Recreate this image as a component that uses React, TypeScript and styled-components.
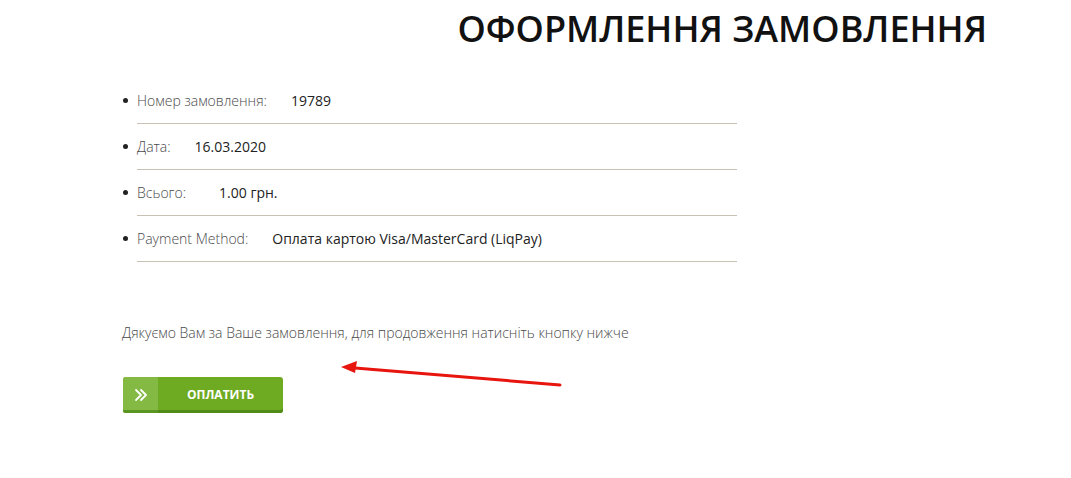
import styled, { createGlobalStyle } from 'styled-components';

interface OrderField {
  label: string;
  value: string;
  gap?: number;
}

const fields: OrderField[] = [
  { label: 'Номер замовлення:', value: '19789' },
  { label: 'Дата:', value: '16.03.2020' },
  { label: 'Всього:', value: '1.00 грн.', gap: 33 },
  { label: 'Payment Method:', value: 'Оплата картою Visa/MasterCard (LiqPay)' },
];

const GlobalStyle = createGlobalStyle`
  html, body {
    margin: 0;
    padding: 0;
    background: #ffffff;
  }
  body {
    font-family: 'Open Sans', 'Liberation Sans', sans-serif;
  }
`;

const Page = styled.div`
  position: relative;
  width: 1071px;
  height: 478px;
  box-sizing: border-box;
  padding: 8px 84px 0 122px;
  display: flex;
  flex-direction: column;
  overflow: hidden;
`;

const Title = styled.h1`
  margin: 0;
  text-align: right;
  font-size: 36px;
  font-weight: 600;
  line-height: 42px;
  color: #111111;
`;

const List = styled.ul`
  margin: 28px 0 0 0;
  padding: 0;
  list-style: none;
  width: 615px;
`;

const Item = styled.li`
  position: relative;
  display: flex;
  align-items: center;
  height: 45px;
  margin-left: 15px;
  border-bottom: 1px solid #c9c1b3;
  font-size: 14px;

  &::before {
    content: '';
    position: absolute;
    left: -14px;
    top: calc(50% - 3px);
    width: 5px;
    height: 5px;
    border-radius: 50%;
    background: #222222;
  }
`;

const Label = styled.span<{ $gap: number }>`
  color: #4a4a4a;
  font-weight: 300;
  margin-right: ${(p) => p.$gap}px;
`;

const Value = styled.span`
  color: #222222;
  font-size: 14px;
`;

const Thanks = styled.p`
  margin: 61px 0 0 0;
  font-size: 14px;
  font-weight: 300;
  color: #4a4a4a;
`;

const PayButton = styled.button`
  margin-top: 35px;
  margin-left: 1px;
  width: 160px;
  height: 36px;
  padding: 0;
  border: none;
  border-radius: 3px;
  background: #6eaa22;
  box-shadow: inset 0 -3px 0 #508b18;
  display: flex;
  align-items: stretch;
  overflow: hidden;
  cursor: pointer;
  font-family: inherit;
`;

const IconPart = styled.span`
  width: 35px;
  background: #84b944;
  box-shadow: inset 0 -3px 0 #5c9622;
  display: flex;
  align-items: center;
  justify-content: center;
  color: #ffffff;
`;

const TextPart = styled.span`
  flex: 1;
  display: flex;
  align-items: center;
  justify-content: center;
  padding-bottom: 2px;
  color: #ffffff;
  font-size: 12px;
  font-weight: 700;
`;

const Arrow = styled.svg`
  position: absolute;
  left: 335px;
  top: 355px;
`;

const App = () => {
  return (
    <>
      <GlobalStyle />
      <Page>
        <Title>ОФОРМЛЕННЯ ЗАМОВЛЕННЯ</Title>
        <List>
          {fields.map((f) => (
            <Item key={f.label}>
              <Label $gap={f.gap ?? 24}>{f.label}</Label>
              <Value>{f.value}</Value>
            </Item>
          ))}
        </List>
        <Thanks>Дякуємо Вам за Ваше замовлення, для продовження натисніть кнопку нижче</Thanks>
        <PayButton>
          <IconPart>
            <svg width="14" height="14" viewBox="0 0 14 14" fill="none" stroke="#fff" strokeWidth="1.8" strokeLinecap="round" strokeLinejoin="round">
              <path d="M2 2 L7 7 L2 12" />
              <path d="M7 2 L12 7 L7 12" />
            </svg>
          </IconPart>
          <TextPart>ОПЛАТИТЬ</TextPart>
        </PayButton>
        <Arrow width="240" height="40" viewBox="0 0 240 40">
          <line x1="225" y1="30" x2="20" y2="13" stroke="#e8150f" strokeWidth="3" strokeLinecap="round" />
          <polygon points="6,12 22,6 20,18" fill="#e8150f" />
        </Arrow>
      </Page>
    </>
  );
};

export default App;
